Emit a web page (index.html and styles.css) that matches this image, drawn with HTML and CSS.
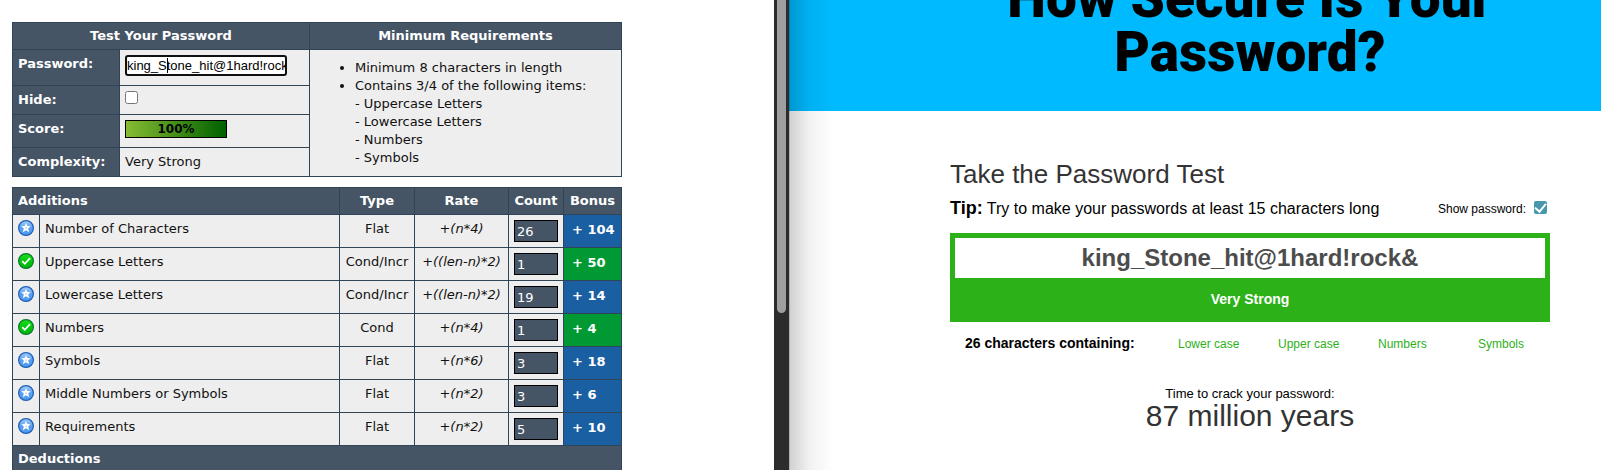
FILE: index.html
```html
<!DOCTYPE html>
<html lang="en">
<head>
<meta charset="utf-8">
<title>Password strength</title>
<link rel="stylesheet" href="styles.css">
</head>
<body>
<svg class="defs" aria-hidden="true">
  <defs>
    <linearGradient id="blue" x1="0" y1="0" x2="0" y2="1">
      <stop offset="0" stop-color="#a4cdfa"/><stop offset="0.5" stop-color="#5b9ff0"/><stop offset="1" stop-color="#4d9bf0"/>
    </linearGradient>
    <linearGradient id="green" x1="0" y1="0" x2="0" y2="1">
      <stop offset="0" stop-color="#1be01b"/><stop offset="0.5" stop-color="#04c80e"/><stop offset="1" stop-color="#02b40c"/>
    </linearGradient>
    <symbol id="exceed" viewBox="0 0 16 16">
      <circle cx="8" cy="8" r="7.4" fill="url(#blue)" stroke="#1c5fb8" stroke-width="1.2"/>
      <path d="M8 3 9.3 6.1 12.7 6.3 10.2 8.6 11.2 12.3 8 10.3 4.8 12.3 5.8 8.6 3.3 6.3 6.7 6.1Z" fill="#fff"/>
      <circle cx="8" cy="8" r="0.6" fill="#4c8fe2"/>
    </symbol>
    <symbol id="pass" viewBox="0 0 16 16">
      <circle cx="8" cy="8" r="7.4" fill="url(#green)" stroke="#0a7a2c" stroke-width="1.2"/>
      <path d="M4.2 8.2 6.8 10.8 12 5.2" fill="none" stroke="#fff" stroke-width="1.8"/>
    </symbol>
  </defs>
</svg>
<div class="screen">
  <section class="meter">
    <main class="meter-page">
      <table class="grid summary">
        <colgroup><col class="c-label"><col class="c-value"><col></colgroup>
        <tr><th class="center" colspan="2">Test Your Password</th><th class="center">Minimum Requirements</th></tr>
        <tr class="row-password">
          <th class="side"><label for="pwd">Password:</label></th>
          <td><div class="field"><input id="pwd" class="pwd" type="text" value="king_Stone_hit@1hard!rock&amp;"><span class="caret"></span></div></td>
          <td rowspan="4">
            <ul class="reqs">
              <li>Minimum 8 characters in length</li>
              <li>Contains 3/4 of the following items:<br>- Uppercase Letters<br>- Lowercase Letters<br>- Numbers<br>- Symbols</li>
            </ul>
          </td>
        </tr>
        <tr class="row-hide"><th class="side"><label for="hide">Hide:</label></th><td><input id="hide" class="check" type="checkbox"></td></tr>
        <tr class="row-score"><th class="side">Score:</th><td><div class="score">100%</div></td></tr>
        <tr class="row-complexity"><th class="side">Complexity:</th><td>Very Strong</td></tr>
      </table>

      <table class="grid details">
        <colgroup><col class="c-icon"><col><col class="c-type"><col class="c-rate"><col class="c-count"><col class="c-bonus"></colgroup>
        <tr><th colspan="2">Additions</th><th class="center">Type</th><th class="center">Rate</th><th class="center">Count</th><th class="center">Bonus</th></tr>
        <tr><td><svg class="icon"><use href="#exceed"/></svg></td><td>Number of Characters</td><td class="center">Flat</td><td class="rate">+(n*4)</td><td><input class="count" type="text" aria-label="Number of Characters count" value="26"></td><td class="bonus exceed">+ 104</td></tr>
        <tr><td><svg class="icon"><use href="#pass"/></svg></td><td>Uppercase Letters</td><td class="center">Cond/Incr</td><td class="rate">+((len-n)*2)</td><td><input class="count" type="text" aria-label="Uppercase Letters count" value="1"></td><td class="bonus pass">+ 50</td></tr>
        <tr><td><svg class="icon"><use href="#exceed"/></svg></td><td>Lowercase Letters</td><td class="center">Cond/Incr</td><td class="rate">+((len-n)*2)</td><td><input class="count" type="text" aria-label="Lowercase Letters count" value="19"></td><td class="bonus exceed">+ 14</td></tr>
        <tr><td><svg class="icon"><use href="#pass"/></svg></td><td>Numbers</td><td class="center">Cond</td><td class="rate">+(n*4)</td><td><input class="count" type="text" aria-label="Numbers count" value="1"></td><td class="bonus pass">+ 4</td></tr>
        <tr><td><svg class="icon"><use href="#exceed"/></svg></td><td>Symbols</td><td class="center">Flat</td><td class="rate">+(n*6)</td><td><input class="count" type="text" aria-label="Symbols count" value="3"></td><td class="bonus exceed">+ 18</td></tr>
        <tr><td><svg class="icon"><use href="#exceed"/></svg></td><td>Middle Numbers or Symbols</td><td class="center">Flat</td><td class="rate">+(n*2)</td><td><input class="count" type="text" aria-label="Middle Numbers or Symbols count" value="3"></td><td class="bonus exceed">+ 6</td></tr>
        <tr><td><svg class="icon"><use href="#exceed"/></svg></td><td>Requirements</td><td class="center">Flat</td><td class="rate">+(n*2)</td><td><input class="count" type="text" aria-label="Requirements count" value="5"></td><td class="bonus exceed">+ 10</td></tr>
        <tr><th colspan="6">Deductions</th></tr>
      </table>
    </main>
    <div class="scrollbar"><div class="thumb"></div></div>
  </section>

  <section class="secure">
    <header class="banner"><h1>How Secure Is Your Password?</h1></header>
    <div class="test">
      <h2>Take the Password Test</h2>
      <div class="tip-row">
        <p class="tip"><strong>Tip:</strong> Try to make your passwords at least 15 characters long</p>
        <label class="show" for="show">Show password: <input id="show" class="show-check" type="checkbox" checked></label>
      </div>
      <div class="result">
        <input class="test-input" type="text" aria-label="Password to test" value="king_Stone_hit@1hard!rock&amp;">
        <div class="verdict">Very Strong</div>
      </div>
      <div class="contains">
        <strong>26 characters containing:</strong>
        <span>Lower case</span><span>Upper case</span><span>Numbers</span><span>Symbols</span>
      </div>
      <div class="crack">
        <div class="crack-label">Time to crack your password:</div>
        <div class="crack-time">87 million years</div>
      </div>
    </div>
  </section>
</div>
</body>
</html>
```
FILE: styles.css
```css
* { box-sizing: border-box; }
body { margin: 0; background: #fff; overflow: hidden; }
.defs { position: absolute; width: 0; height: 0; }
.screen { display: grid; grid-template-columns: 789fr 812fr; height: 100vh; overflow: hidden; }

/* Left window */
.meter { display: flex; min-width: 0; overflow: hidden; font: 13px/16px Verdana, "DejaVu Sans", sans-serif; color: #111; }
.meter-page { flex: 1; min-width: 0; padding: 22px 12px 0; }
.grid { width: 100%; max-width: 610px; border-collapse: collapse; table-layout: fixed; margin-bottom: 10px; }
.grid th, .grid td { border: 1px solid #304457; padding: 5px; vertical-align: top; text-align: left; }
.grid th { background: #455565; color: #fff; font-weight: bold; }
.grid td { background: #eee; }
.grid td, .grid .side { line-height: 18px; }
.grid .center { text-align: center; }
.c-label { width: 107px; }
.c-value { width: 190px; }
.c-icon { width: 27px; }
.c-type { width: 75px; }
.c-rate { width: 94px; }
.c-count { width: 55px; }
.c-bonus { width: 58px; }
.row-password { height: 36px; }
.row-hide { height: 29px; }
.row-score { height: 33px; }
.row-complexity { height: 29px; }

.field { position: relative; width: 162px; }
.pwd { display: block; width: 100%; height: 21px; margin: 0; padding: 0; border: 2px solid #101010; border-radius: 3px; background: #fff; color: #000; font: 13px/17px "Liberation Sans", Arial, sans-serif; outline: 0; }
.caret { position: absolute; left: 42px; top: 3px; width: 1px; height: 15px; background: #000; }
.check { display: block; width: 13px; height: 13px; margin: 0; }
.score { width: 102px; height: 18px; border: 1px solid #000; background: linear-gradient(to right, #86bc33, #006000); color: #000; font-size: 12px; line-height: 16px; font-weight: bold; text-align: center; }
.reqs { margin: 4px 0 0; padding-left: 40px; line-height: 18px; }

.icon { display: block; width: 16px; height: 16px; }
.grid .rate { text-align: center; font-style: italic; white-space: nowrap; padding: 5px 0; }
.count { display: block; width: 44px; height: 22px; margin: 0; padding: 0 2px; border: 1px solid #000; background: #455565; color: #fff; font: inherit; }
.grid .bonus { padding: 6px 8px; color: #fff; font-weight: bold; white-space: nowrap; }
.grid .bonus.exceed { background: #1b5fa3; }
.grid .bonus.pass { background: #093; }

.scrollbar { width: 15px; padding: 0 3px; background: #2c2c2c; }
.thumb { height: 313px; border-radius: 0 0 5px 5px; background: #9f9f9f; }

/* Right window */
.secure { position: relative; min-width: 0; overflow: hidden; padding-bottom: 24px; background: #fff; color: #000; font-family: "Liberation Sans", Arial, sans-serif; }
.secure::after { content: ""; position: absolute; inset: 0 auto 0 0; width: 44px; border-left: 1px solid rgba(0, 0, 0, 0.3); background: linear-gradient(to right, rgba(0, 0, 0, 0.18), rgba(0, 0, 0, 0.05) 45%, rgba(0, 0, 0, 0)); pointer-events: none; }
.banner { display: flex; flex-direction: column; justify-content: flex-end; height: 111px; padding: 0 51px 32px 161px; background: #00baff; overflow: hidden; }
.banner h1 { width: 100%; max-width: 520px; margin: 0 auto; text-align: center; font: 900 55px/54px Roboto, sans-serif; }
.test { padding: 47px 51px 0 161px; }
.test h2 { margin: 0; font-size: 26px; line-height: 32px; font-weight: normal; color: #333; }
.tip-row { display: flex; justify-content: space-between; align-items: center; height: 37px; padding-right: 3px; }
.tip { margin: 0; font-size: 16px; line-height: 20px; }
.tip strong { font-size: 18px; }
.show { display: flex; gap: 8px; font-size: 12px; line-height: 16px; }
.show-check { appearance: none; width: 13px; height: 13px; margin: 0; border-radius: 2px; background: #4797ad; display: grid; place-items: center; }
.show-check::before { content: ""; width: 5px; height: 9px; margin-bottom: 2px; border: solid #fff; border-width: 0 2px 2px 0; transform: rotate(40deg); }
.result { margin-top: 6px; padding: 5px; background: #2db119; }
.test-input { display: block; width: 100%; height: 40px; margin: 0; padding: 0; border: 0; background: #fff; color: #4c4c4c; font: bold 24px/28px "Liberation Sans", Arial, sans-serif; text-align: center; }
.verdict { padding: 13px 0 10px; color: #fff; font-size: 14px; line-height: 16px; font-weight: bold; text-align: center; }
.contains { display: grid; grid-template-columns: 213fr 100fr 100fr 100fr 72fr; align-items: baseline; padding: 13px 0 0 15px; color: #2db119; font-size: 12px; line-height: 16px; }
.contains strong { color: #000; font-size: 14px; }
.crack { padding-top: 34px; text-align: center; }
.crack-label { font-size: 13px; line-height: 16px; }
.crack-time { font-size: 30px; line-height: 28px; color: #333; }
```
